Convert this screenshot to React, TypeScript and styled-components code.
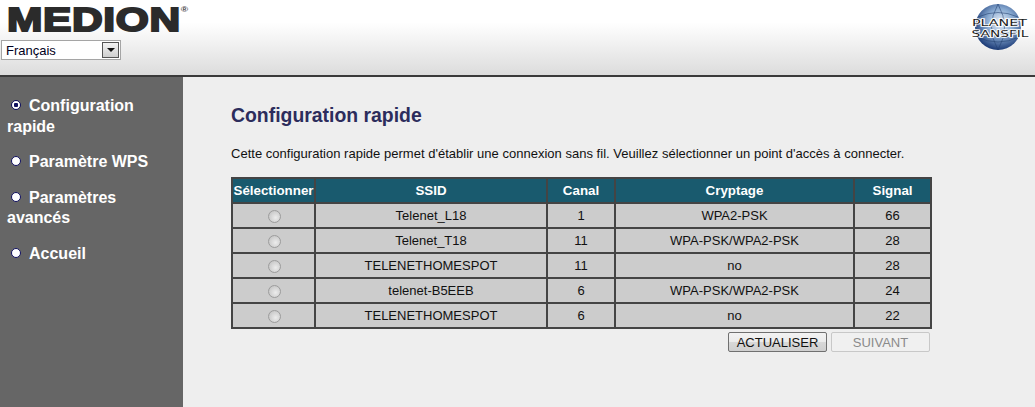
import React from "react";
import styled, { createGlobalStyle } from "styled-components";

const Global = createGlobalStyle`
  html, body { margin: 0; padding: 0; height: 100%; background: #eeeeee; }
  body { font-family: "Liberation Sans", Arial, sans-serif; overflow: hidden; }
`;

const Page = styled.div`
  width: 1035px;
  height: 407px;
  display: flex;
  flex-direction: column;
  overflow: hidden;
`;

const Header = styled.header`
  box-sizing: border-box;
  height: 77px;
  flex: none;
  display: flex;
  justify-content: space-between;
  background: linear-gradient(180deg, #ffffff 0%, #ffffff 30%, #dcdcdc 100%);
  border-bottom: 2px solid #3a3a3a;
`;

const Brand = styled.div`
  display: flex;
  flex-direction: column;
  padding: 2px 0 0 1px;
`;

const LogoRow = styled.div`
  height: 38px;
  padding-top: 1px;
  box-sizing: border-box;
  display: flex;
  align-items: flex-start;
`;

const Logo = styled.span`
  font-family: "Liberation Sans", sans-serif;
  font-weight: 700;
  font-size: 34px;
  line-height: 33px;
  color: #2b2b2b;
  -webkit-text-stroke: 2px #2b2b2b;
  letter-spacing: 0.5px;
  display: inline-block;
  transform: scaleX(1.25);
  transform-origin: left top;
  margin-left: 6px;
  white-space: nowrap;
`;

const Registered = styled.sup`
  font-size: 8px;
  line-height: 9px;
  letter-spacing: 0;
  -webkit-text-stroke: 0;
  vertical-align: 19px;
  color: #444;
`;

const LangSelect = styled.div`
  box-sizing: border-box;
  width: 120px;
  height: 20px;
  border: 1px solid #a5a5a5;
  background: #fff;
  display: flex;
  align-items: center;
  justify-content: space-between;
  padding: 0 1px 0 4px;
  font-size: 13px;
  color: #000020;
`;

const SelectArrow = styled.span`
  box-sizing: border-box;
  width: 17px;
  height: 16px;
  border: 1px solid #555;
  background: linear-gradient(180deg, #f2f2f2, #cfcfcf);
  display: flex;
  align-items: center;
  justify-content: center;
  &::after {
    content: "";
    border-left: 4px solid transparent;
    border-right: 4px solid transparent;
    border-top: 4px solid #111;
  }
`;

const Globe = styled.svg`
  margin: 2px 0 0 0;
  width: 64px;
  height: 60px;
  flex: none;
`;

const Body = styled.div`
  flex: 1;
  display: flex;
  min-height: 0;
`;

const Sidebar = styled.nav`
  box-sizing: border-box;
  width: 183px;
  flex: none;
  background: #666666;
  padding: 19px 0 0 7px;
  display: flex;
  flex-direction: column;
  gap: 15px;
`;

const NavItem = styled.a`
  display: block;
  width: 150px;
  color: #ffffff;
  font-weight: 700;
  font-size: 16px;
  line-height: 20.5px;
`;

const Bullet = styled.span<{ $active?: boolean }>`
  display: inline-block;
  box-sizing: border-box;
  width: 10px;
  height: 10px;
  border-radius: 50%;
  border: 1px solid #101060;
  margin: 0 8px 0 4px;
  vertical-align: 1px;
  background: ${(p) =>
    p.$active
      ? "radial-gradient(circle, #101060 0 2px, #ffffff 2.5px)"
      : "#ffffff"};
`;

const Main = styled.main`
  flex: 1;
  background: #eeeeee;
  padding: 26px 0 0 48px;
`;

const Title = styled.h1`
  margin: 0;
  font-size: 19.4px;
  line-height: 24px;
  font-weight: 700;
  color: #2c2c5c;
`;

const Intro = styled.p`
  margin: 19px 0 0;
  font-size: 13px;
  letter-spacing: 0.017px;
  line-height: 16px;
  color: #111111;
  white-space: nowrap;
`;

const Table = styled.table`
  margin-top: 15px;
  width: 699px;
  table-layout: fixed;
  border-collapse: collapse;
  border: 2px solid #444444;
`;

const Head = styled.th`
  height: 23px;
  padding: 0;
  background: #195a6e;
  color: #ffffff;
  font-size: 13.33px;
  font-weight: 700;
  text-align: center;
  border: 2px solid #444444;
  white-space: nowrap;
`;

const Cell = styled.td`
  height: 23px;
  padding: 0;
  background: #cccccc;
  color: #111111;
  font-size: 13px;
  text-align: center;
  border: 2px solid #444444;
`;

const Radio = styled.input`
  appearance: none;
  display: block;
  box-sizing: border-box;
  width: 13px;
  height: 13px;
  margin: 2px 0 0 35px;
  border-radius: 50%;
  border: 1px solid #9c9c9c;
  background: radial-gradient(circle at 60% 60%, #ececec, #bdbdbd);
`;

const Actions = styled.div`
  width: 699px;
  margin-top: 3px;
  display: flex;
  justify-content: flex-end;
  gap: 4px;
`;

const Button = styled.button`
  box-sizing: border-box;
  width: 99px;
  height: 20px;
  padding: 0;
  border-radius: 2px;
  border: 1px solid ${(p) => (p.disabled ? "#c8c8c8" : "#707070")};
  background: ${(p) =>
    p.disabled
      ? "#f0f0f0"
      : "linear-gradient(180deg, #f2f2f2 0%, #ebebeb 50%, #d8d8d8 51%, #cfcfcf 100%)"};
  color: ${(p) => (p.disabled ? "#8a8a8a" : "#111111")};
  font-family: "Liberation Sans", sans-serif;
  font-size: 13px;
`;

const rows = [
  ["Telenet_L18", "1", "WPA2-PSK", "66"],
  ["Telenet_T18", "11", "WPA-PSK/WPA2-PSK", "28"],
  ["TELENETHOMESPOT", "11", "no", "28"],
  ["telenet-B5EEB", "6", "WPA-PSK/WPA2-PSK", "24"],
  ["TELENETHOMESPOT", "6", "no", "22"],
];

export default function App() {
  return (
    <Page>
      <Global />
      <Header>
        <Brand>
          <LogoRow>
            <Logo>
              MEDION<Registered>®</Registered>
            </Logo>
          </LogoRow>
          <LangSelect>
            Français
            <SelectArrow />
          </LangSelect>
        </Brand>
        <Globe viewBox="0 0 64 60">
          <defs>
            <radialGradient id="g" cx="0.55" cy="0.4" r="0.6">
              <stop offset="0" stopColor="#eef3fa" />
              <stop offset="0.5" stopColor="#86a8d0" />
              <stop offset="1" stopColor="#1d3c78" />
            </radialGradient>
          </defs>
          <circle cx="27" cy="25" r="23" fill="url(#g)" />
          <path d="M7 15 Q27 6 47 15 M6 35 Q27 45 48 35 M27 2 Q14 25 27 48 M27 2 Q40 25 27 48" fill="none" stroke="#23406f" strokeWidth="1" opacity="0.55" />
          <text x="28.5" y="24" textAnchor="middle" fontFamily="DejaVu Sans" fontSize="8" fill="#1c1c1c" stroke="#fff" strokeWidth="1.5" paintOrder="stroke" textLength="55" lengthAdjust="spacingAndGlyphs">PLANET</text>
          <text x="29" y="35" textAnchor="middle" fontFamily="DejaVu Sans" fontSize="9" fill="#1c1c1c" stroke="#fff" strokeWidth="1.5" paintOrder="stroke" textLength="57" lengthAdjust="spacingAndGlyphs">SANSFIL</text>
        </Globe>
      </Header>
      <Body>
        <Sidebar>
          <NavItem><Bullet $active />Configuration rapide</NavItem>
          <NavItem><Bullet />Paramètre WPS</NavItem>
          <NavItem><Bullet />Paramètres avancés</NavItem>
          <NavItem><Bullet />Accueil</NavItem>
        </Sidebar>
        <Main>
          <Title>Configuration rapide</Title>
          <Intro>Cette configuration rapide permet d'établir une connexion sans fil. Veuillez sélectionner un point d'accès à connecter.</Intro>
          <Table>
            <colgroup>
              <col width="83" />
              <col width="232" />
              <col width="68" />
              <col width="239" />
              <col width="77" />
            </colgroup>
            <thead>
              <tr>
                <Head>Sélectionner</Head>
                <Head>SSID</Head>
                <Head>Canal</Head>
                <Head>Cryptage</Head>
                <Head>Signal</Head>
              </tr>
            </thead>
            <tbody>
              {rows.map((r, i) => (
                <tr key={i}>
                  <Cell><Radio type="radio" disabled /></Cell>
                  {r.map((c, j) => <Cell key={j}>{c}</Cell>)}
                </tr>
              ))}
            </tbody>
          </Table>
          <Actions>
            <Button>ACTUALISER</Button>
            <Button disabled>SUIVANT</Button>
          </Actions>
        </Main>
      </Body>
    </Page>
  );
}
